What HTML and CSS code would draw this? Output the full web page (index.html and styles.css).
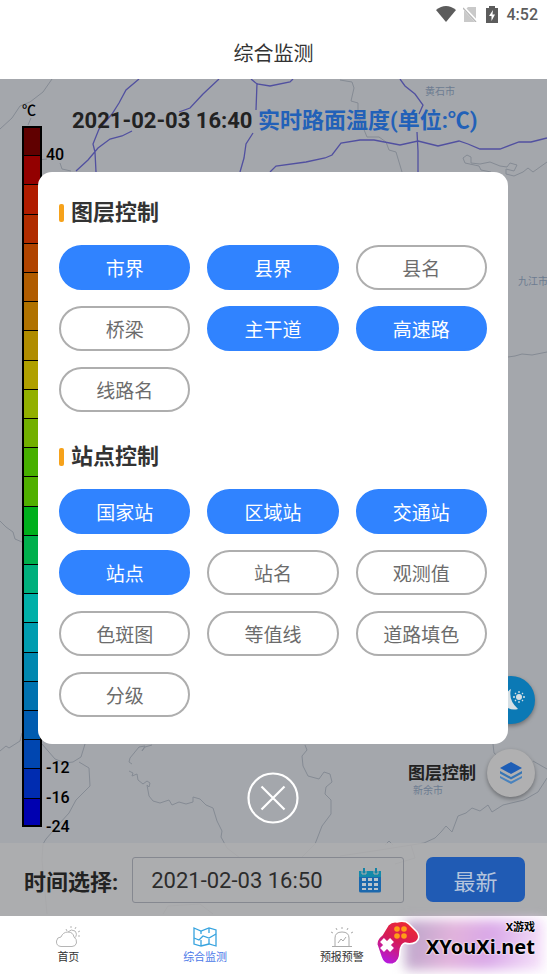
FILE: index.html
```html
<!DOCTYPE html>
<html lang="zh-CN">
<head>
    <meta charset="UTF-8">
    <title>综合监测</title>
    <meta name="viewport" content="width=device-width, initial-scale=1.0">
    <link rel="stylesheet" href="styles.css">
</head>
<body>
    <header class="header">
        <div class="status-bar">
            <svg width="20" height="16" viewBox="0 0 20 16"><path d="M0 4Q10-4 20 4L10 16Z" fill="#5c5c5c"/></svg>
            <svg class="sim" width="14" height="16" viewBox="0 0 14 16"><path d="M5 1H13V16H1V5Z" fill="#c9c9c9"/><path d="M0 1L14 16" stroke="#fff" stroke-width="3"/><path d="M0 2L13 16" stroke="#b8b8b8" stroke-width="1.3"/></svg>
            <svg class="battery" width="12" height="17" viewBox="0 0 12 17"><path d="M3 0H9V2H12V17H0V2H3Z" fill="#5c5c5c"/><path d="M7 4L3 10H5.5V15L9 8.500H6.500Z" fill="#fff"/></svg>
            <span>4:52</span>
        </div>
        <h1>综合监测</h1>
    </header>

    <main class="map">
        <svg class="map-bg" viewBox="0 79 547 837" preserveAspectRatio="xMidYMid slice" fill="none">
            <!-- 边界 -->
            <g stroke="#858b94" stroke-width="1">
                <path d="M52 79L43 92L30 102L20 106L12 118L0 129M31 118L28 125M38 160L47 159M60 163L62 169L71 171"/>
                <path d="M340 80L352 82L354 88L351 101L358 103L358 115L367 137L379 137L386 142L389 150L396 152L402 172"/>
                <path d="M491 172L481 170L479 166L465 163L463 158L467 155L471 157L471 163L480 164L490 162L500 166L507 167L510 163L517 165L514 171L506 169L506 174L514 176L523 172L528 168L533 172L547 162"/>
                <path d="M508 357L515 356L522 354L532 355L547 352M0 521L6 527L13 532L15 539L22 542L28 547"/>
                <path d="M0 751L6 746L9 748L20 741L22 733L28 727M42 744L55 759L65 763L73 762L81 757L85 744M79 762L89 768L90 786L76 800L69 813L59 824L46 839L43 844L42 860L47 914"/>
                <path d="M152 745L145 747L142 751L145 746L139 747L130 758L129 762L132 764M129 771L133 773L132 776L137 774L138 780L143 784L147 781L150 783L149 787L147 785L149 796L153 801L160 803L169 800L172 805L179 802L186 804L193 802L193 797L200 799L206 805L213 808L217 821L222 831L221 837L227 848L240 858"/>
                <path d="M305 745L307 750L302 756L303 766L308 776L319 779L324 772L330 774L332 782L326 787L325 794L331 800L331 814L322 826L317 839L315 844L302 857"/>
                <path d="M493 744L494 753L500 758M533 761L547 769M547 778L538 792L524 800L503 805L492 812L488 805L480 811L472 808L466 813L458 816L452 832L446 826L441 832L435 838L424 843L380 850L340 856M411 845L415 858L395 864M163 914L168 906L200 904L213 914M385 845L389 841L393 845"/>
            </g>
            <!-- 高速路 -->
            <g stroke="#5150a0" stroke-width="1.300">
                <path d="M139 79L126 90L119 103L112 114L99 129L93 144L95 152L96 172M219 79L203 94L190 108L179 112M132 131L122 136L110 139L98 148L88 160L76 171"/>
                <path d="M251 79L257 84L270 86L290 82L293 79M257 83L256 110M253 133L246 144L244 158L240 172M270 172L276 166L306 162L325 158L332 155L341 143L360 140L374 140L400 145L418 141L438 146L459 141L468 144L480 149L500 149L519 142L531 142L547 138"/>
                <path d="M400 79L405 86L415 94L423 105L419 114M417 132L418 151L418 172" />
            </g>
            <g class="map-label">
                <text x="425" y="95">黄石市</text>
                <text x="518" y="285">九江市</text>
                <text x="413" y="794">新余市</text>
            </g>
        </svg>

        <div class="stage">
            <div class="legend">
                <div class="legend-unit">℃</div>
                <ul id="legend-list"></ul>
            </div>
            <h2 class="map-title"><time>2021-02-03 16:40</time> <span>实时路面温度(单位:℃)</span></h2>
            <div class="tools">
                <button class="tool tool-weather" aria-label="天气">
                    <svg width="40" height="40" viewBox="0 0 40 40"><path d="M20 9Q17 20 27 29Q20 31 14 26Q8 17 20 9Z" fill="#d5dfe4"/><circle cx="28" cy="17" r="3" fill="#d5dfe4"/><path d="M28 11V13M28 21V23M22 17H24M32 17H34M24 13L25 14M31 20L32 21M32 13L31 14M25 20L24 21" stroke="#d5dfe4" stroke-width="1.300"/></svg>
                </button>
                <div class="tool-row">
                    <span id="layer-label">图层控制</span>
                    <button class="tool" aria-labelledby="layer-label">
                        <svg width="24" height="22" viewBox="0 0 24 22"><path d="M12 0L23 6L12 12L1 6Z" fill="#1e5eb6"/><path d="M1 9L12 15L23 9V11.500L12 17.500L1 11.500Z" fill="#3675b5"/><path d="M1 14L12 19.500L23 14V16L12 22L1 16Z" fill="#4a83bd"/></svg>
                    </button>
                </div>
            </div>
        </div>

        <form class="time-bar">
            <label for="time">时间选择:</label>
            <div class="time-field">
                <input type="text" id="time" value="2021-02-03 16:50">
                <svg width="24" height="25" viewBox="0 0 24 25"><path d="M1 3H23V23Q23 24.500 21 24.500H3Q1 24.500 1 23Z" fill="#1b68ad"/><path d="M1 3H23V9H1Z" fill="#148aa9"/><path d="M5 0H7V5H5ZM17 0H19V5H17Z" fill="#1482a5"/><path d="M3 2H4V6H8V2H16V6H20V2" stroke="#acacad" fill="none"/><path d="M4 10H8V13H4ZM10 10H14V13H10ZM16 10H20V13H16ZM4 15H8V18H4ZM10 15H14V18H10ZM16 15H20V18H16ZM4 20H8V22H4ZM10 20H14V22H10ZM16 20H20V22H16Z" fill="#b9c3cb"/></svg>
            </div>
            <button type="button" class="latest">最新</button>
        </form>

        <div class="modal">
            <div class="panel">
                <h3>图层控制</h3>
                <div class="options">
                    <button class="option active">市界</button>
                    <button class="option active">县界</button>
                    <button class="option">县名</button>
                    <button class="option">桥梁</button>
                    <button class="option active">主干道</button>
                    <button class="option active">高速路</button>
                    <button class="option">线路名</button>
                </div>
                <h3>站点控制</h3>
                <div class="options">
                    <button class="option active">国家站</button>
                    <button class="option active">区域站</button>
                    <button class="option active">交通站</button>
                    <button class="option active">站点</button>
                    <button class="option">站名</button>
                    <button class="option">观测值</button>
                    <button class="option">色斑图</button>
                    <button class="option">等值线</button>
                    <button class="option">道路填色</button>
                    <button class="option">分级</button>
                </div>
            </div>
            <button class="close" aria-label="关闭">
                <svg width="52" height="52" viewBox="0 0 52 52" fill="none" stroke="#fff" stroke-width="2.200"><circle cx="26" cy="26" r="24.500"/><path d="M14.500 14.500L37.500 37.500M37.500 14.500L14.500 37.500"/></svg>
            </button>
        </div>
    </main>

    <nav class="tabs">
        <a href="#">
            <svg width="26" height="22" viewBox="0 0 26 22" fill="none" stroke="#b5b5b5"><path d="M6 20.500Q1 20 1.500 15Q2 11 6 11Q8 6 13 6Q18 6 19 11Q22 13 21.500 17Q20.500 20.500 17 20.500Z"/><path d="M13 6Q16 2.500 20 5Q23 9 19.500 12M11 3L12 5M16 0V2M21 1L20 3M25 5L23 6M23 10H25"/></svg>
            <span>首页</span>
        </a>
        <a href="#" class="current">
            <svg width="26" height="22" viewBox="0 0 26 22" fill="none" stroke="#36a3df" stroke-width="1.300"><path d="M2 2L9 5L17 2L24 4V20L17 18L9 20L2 18Z"/><path d="M2 12L7 14L11 10L17 12L24 8M9 5V8M9 14V20M17 2V7M17 13V18"/></svg>
            <span>综合监测</span>
        </a>
        <a href="#">
            <svg width="26" height="22" viewBox="0 0 26 22" fill="none" stroke="#aaa"><path d="M3 20.500H23M6 20V12Q6 6 13 6Q20 6 20 12V20M9 17L12 13L14 15L17 11M13 1V3M7 2L8 4M19 2L18 4M2 6L4 7M24 6L22 7"/></svg>
            <span>预报预警</span>
        </a>
        <a href="#" aria-label="我的"></a>
        <div class="site-mark">
            <svg width="46" height="46" viewBox="0 0 46 46">
                <defs><linearGradient id="pad" x1="0.800" y1="0" x2="0.300" y2="1"><stop stop-color="#ef2b2f"/><stop offset="0.500" stop-color="#d51b58"/><stop offset="1" stop-color="#b51be0"/></linearGradient></defs>
                <path d="M13 5Q17 1 22 2Q30 0 34 4L42 12Q46 18 41 22Q36 25 30 23Q26 24 25 31Q25 42 18 44Q9 46 6 37L2 25Q1 20 7 15Z" fill="url(#pad)" stroke="#fff" stroke-width="1.500"/>
                <path d="M7 20L17 30M17 20L7 30" stroke="#fff" stroke-width="5.500"/>
                <g fill="#ff9d16"><circle cx="22" cy="9" r="2.800"/><circle cx="29" cy="9" r="2.800"/><circle cx="22" cy="16" r="2.800"/><circle cx="29" cy="16" r="2.800"/></g>
            </svg>
            <div class="site-name"><small>X游戏</small><strong>XYouXi.net</strong></div>
        </div>
    </nav>

    <script>
        const colors = [
            '#600000', '#930000', '#b01c00', '#b02c00', '#b04400', '#b05c00',
            '#b07200', '#b08c00', '#b0a000', '#92b000', '#72b000', '#47b000',
            '#50b000', '#00b01c', '#00b04c', '#00b07c', '#00b0a8', '#009db0',
            '#0088b0', '#0072b0', '#005cb0', '#0046b0', '#002cb0', '#0000b0'
        ];
        const labels = { 0: '40', 21: '-12', 22: '-16', 23: '-24' };

        document.getElementById('legend-list').innerHTML = colors.map((color, i) => `
            <li><i style="background-color: ${color}"></i><span>${labels[i] || ''}</span></li>
        `).join('');
    </script>
</body>
</html>
```
FILE: styles.css
```css
* {
    box-sizing: border-box;
}

body {
    display: flex;
    flex-direction: column;
    min-height: 100vh;
    margin: 0;
    background-color: #fff;
    color: #222;
    font-family: Roboto, "Noto Sans CJK SC", sans-serif;
}

h1, h2, h3, ul {
    margin: 0;
    padding: 0;
}

button, input {
    font-family: inherit;
}

button {
    padding: 0;
    border: none;
    cursor: pointer;
}

svg {
    display: block;
    flex-shrink: 0;
}

.header {
    height: 79px;
}

.status-bar {
    display: flex;
    align-items: center;
    justify-content: flex-end;
    gap: 7px;
    height: 28px;
    padding-right: 9px;
    color: #5c5c5c;
    font-size: 16px;
    font-weight: 500;
}

.battery {
    margin: 0 2px;
}

h1 {
    color: #333;
    font-size: 20px;
    font-weight: normal;
    line-height: 52px;
    text-align: center;
}

/* 地图 */
.map {
    position: relative;
    display: flex;
    flex: 1;
    flex-direction: column;
    background-color: #a4a7ac;
}

.map-bg {
    position: absolute;
    width: 100%;
    height: 100%;
}

.map-label {
    fill: #6d7c91;
    font-size: 10px;
}

.stage {
    position: relative;
    display: flex;
    flex: 1;
    align-items: flex-start;
    padding: 20px 12px 16px 22px;
}

.legend {
    display: flex;
    flex-direction: column;
    align-self: stretch;
    width: 50px;
    color: #000;
}

.legend-unit {
    height: 27px;
    font-size: 14px;
    font-weight: 500;
    line-height: 22px;
}

.legend ul {
    display: flex;
    flex: 1;
    flex-direction: column;
    list-style: none;
}

.legend li {
    display: flex;
    flex: 1;
    align-items: flex-end;
    gap: 4px;
}

.legend i {
    align-self: stretch;
    width: 20px;
    border: solid #000;
    border-width: 1px 2px 0;
}

.legend li:first-child i {
    border-top-width: 2px;
}

.legend li:last-child i {
    border-bottom-width: 2px;
}

.legend span {
    font-size: 16px;
    font-weight: 500;
    line-height: 0;
}

.map-title {
    flex: 1;
    font-size: 22px;
    font-weight: bold;
    line-height: 44px;
    white-space: nowrap;
}

.map-title time {
    font-weight: bold;
}

.map-title span {
    color: #2261b8;
}

.tools {
    position: absolute;
    right: 12px;
    bottom: 46px;
    display: flex;
    flex-direction: column;
    align-items: flex-end;
    gap: 25px;
}

.tool {
    display: flex;
    align-items: center;
    justify-content: center;
    width: 48px;
    height: 48px;
    border-radius: 50%;
    background-color: #b0b0b1;
    box-shadow: 0 2px 4px rgba(0,0,0,0.35);
}

.tool-weather {
    background-color: #0b79b5;
}

.tool-row {
    display: flex;
    align-items: center;
    gap: 11px;
    font-size: 17px;
    font-weight: bold;
    line-height: 20px;
}

/* 时间选择 */
.time-bar {
    position: relative;
    display: flex;
    align-items: center;
    height: 73px;
    padding: 0 22px 0 24px;
    background-color: rgba(174,174,175,0.85);
    font-size: 22px;
}

.time-bar label {
    font-weight: bold;
    white-space: nowrap;
}

.time-field {
    display: flex;
    flex: 1;
    align-items: center;
    min-width: 0;
    height: 46px;
    margin: 0 22px 0 14px;
    padding: 2px 21px 0 18px;
    border: 1px solid #858890;
    border-radius: 3px;
}

.time-field input {
    flex: 1;
    min-width: 0;
    padding: 0;
    border: none;
    outline: none;
    background: none;
    color: #2c2c2c;
    font-size: 22px;
}

.latest {
    flex-shrink: 0;
    width: 99px;
    height: 45px;
    border-radius: 7px;
    background-color: #205bb4;
    color: #b4c4dc;
    font-size: 22px;
}

/* 图层弹窗 */
.modal {
    position: absolute;
    inset: 0;
    display: flex;
    flex-direction: column;
    align-items: center;
    gap: 28px;
    padding: 93px 39px 0 38px;
}

.panel {
    width: 100%;
    padding: 21px 21px 27px;
    border-radius: 14px;
    background-color: #fff;
}

.panel h3 {
    display: flex;
    align-items: center;
    gap: 7px;
    margin-bottom: 12px;
    color: #333;
    font-size: 22px;
    font-weight: bold;
    line-height: 40px;
}

.panel h3::before {
    content: "";
    width: 5px;
    height: 18px;
    border-radius: 2px;
    background-color: #f6a21b;
}

.options {
    display: grid;
    grid-template-columns: repeat(3, 1fr);
    gap: 16px 17px;
}

.options + h3 {
    margin-top: 25px;
}

.option {
    height: 45px;
    border: 2px solid #aeaeae;
    border-radius: 23px;
    background-color: #fff;
    color: #6c6c6c;
    font-size: 19px;
}

.option.active {
    border-color: #3083ff;
    background-color: #3083ff;
    color: #fff;
}

.close {
    background: none;
}

/* 底部导航 */
.tabs {
    position: relative;
    display: grid;
    grid-template-columns: repeat(4, 1fr);
    height: 58px;
}

.tabs a {
    display: flex;
    flex-direction: column;
    align-items: center;
    padding-top: 10px;
    color: #333;
    font-size: 11px;
    line-height: 20px;
    text-decoration: none;
}

.tabs .current {
    color: #4a78e8;
}

.site-mark {
    position: absolute;
    right: 0;
    bottom: 0;
    display: flex;
    align-items: flex-start;
    gap: 5px;
    height: 58px;
    padding: 4px 12px 0 0;
}

.site-mark::before {
    content: "";
    position: absolute;
    inset: 4px 4px 4px 30px;
    background: linear-gradient(100deg, #b9a5c8, #e2b3dc 35%, #d9a8e8 60%, #f6e3fa);
    filter: blur(6px);
}

.site-mark svg, .site-name {
    position: relative;
}

.site-name {
    display: flex;
    flex-direction: column;
    align-items: flex-end;
    color: #000;
    font-family: "Noto Sans", "Noto Sans CJK SC", sans-serif;
    text-shadow: 0 0 2px #fff, 0 0 2px #fff;
}

.site-name small {
    font-size: 11px;
    font-weight: bold;
    line-height: 14px;
}

.site-name strong {
    font-size: 20px;
    line-height: 26px;
}
```
